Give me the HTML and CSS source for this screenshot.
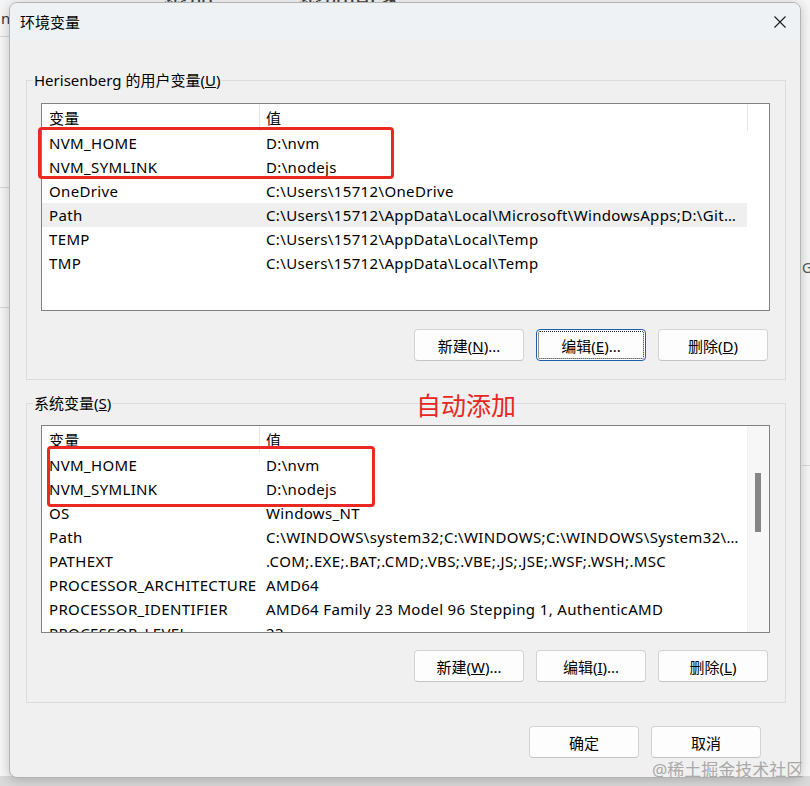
FILE: index.html
```html
<!DOCTYPE html>
<html lang="zh-CN">
<head>
    <meta charset="UTF-8">
    <title>环境变量</title>
    <link rel="stylesheet" href="styles.css">
</head>
<body>
    <div class="desktop">
        <!-- bits of the window behind -->
        <div class="behind behind-top">添加　一　添加回家</div>
        <div class="behind behind-n">n</div>
        <div class="behind behind-g">G</div>
        <div class="behind-line l1"></div>
        <div class="behind-line l2"></div>
        <div class="behind-line l3"></div>
        <div class="behind-line l4"></div>
        <div class="behind-bottom"></div>

        <div class="dialog">
            <div class="titlebar">
                <span class="title">环境变量</span>
                <span class="close">
                    <svg width="12" height="12" viewBox="0 0 12 12"><path d="M0.5 0.5 L11.5 11.5 M11.5 0.5 L0.5 11.5" stroke="#1b1b1b" stroke-width="1.1" fill="none"/></svg>
                </span>
            </div>

            <div class="content">
                <fieldset class="group">
                    <legend>Herisenberg 的用户变量(<u>U</u>)</legend>
                    <div class="list">
                        <div class="rows">
                            <div class="row head"><span class="name">变量</span><span class="value">值</span></div>
                            <div class="row"><span class="name">NVM_HOME</span><span class="value">D:\nvm</span></div>
                            <div class="row"><span class="name">NVM_SYMLINK</span><span class="value">D:\nodejs</span></div>
                            <div class="row"><span class="name">OneDrive</span><span class="value">C:\Users\15712\OneDrive</span></div>
                            <div class="row hover"><span class="name">Path</span><span class="value">C:\Users\15712\AppData\Local\Microsoft\WindowsApps;D:\Git\cmd;D:\nvm;D:\nodejs</span></div>
                            <div class="row"><span class="name">TEMP</span><span class="value">C:\Users\15712\AppData\Local\Temp</span></div>
                            <div class="row"><span class="name">TMP</span><span class="value">C:\Users\15712\AppData\Local\Temp</span></div>
                        </div>
                        <div class="side"><div class="side-head"></div></div>
                    </div>
                    <div class="buttons">
                        <button>新建(<u>N</u>)...</button>
                        <button class="focused">编辑(<u>E</u>)...</button>
                        <button>删除(<u>D</u>)</button>
                    </div>
                </fieldset>

                <fieldset class="group second">
                    <legend>系统变量(<u>S</u>)</legend>
                    <div class="list">
                        <div class="rows">
                            <div class="row head"><span class="name">变量</span><span class="value">值</span></div>
                            <div class="row"><span class="name">NVM_HOME</span><span class="value">D:\nvm</span></div>
                            <div class="row"><span class="name">NVM_SYMLINK</span><span class="value">D:\nodejs</span></div>
                            <div class="row"><span class="name">OS</span><span class="value">Windows_NT</span></div>
                            <div class="row"><span class="name">Path</span><span class="value">C:\WINDOWS\system32;C:\WINDOWS;C:\WINDOWS\System32\Wbem;C:\WINDOWS</span></div>
                            <div class="row"><span class="name">PATHEXT</span><span class="value">.COM;.EXE;.BAT;.CMD;.VBS;.VBE;.JS;.JSE;.WSF;.WSH;.MSC</span></div>
                            <div class="row"><span class="name">PROCESSOR_ARCHITECTURE</span><span class="value">AMD64</span></div>
                            <div class="row"><span class="name">PROCESSOR_IDENTIFIER</span><span class="value">AMD64 Family 23 Model 96 Stepping 1, AuthenticAMD</span></div>
                            <div class="row"><span class="name">PROCESSOR_LEVEL</span><span class="value">23</span></div>
                        </div>
                        <div class="side scroll"><div class="thumb"></div></div>
                    </div>
                    <div class="buttons">
                        <button>新建(<u>W</u>)...</button>
                        <button>编辑(<u>I</u>)...</button>
                        <button>删除(<u>L</u>)</button>
                    </div>
                </fieldset>

                <div class="footer">
                    <button>确定</button>
                    <button>取消</button>
                </div>
            </div>

            <!-- annotations drawn over the screenshot -->
            <div class="mark mark-user"></div>
            <div class="mark mark-system"></div>
            <div class="note">自动添加</div>
        </div>

        <div class="watermark">@稀土掘金技术社区</div>
    </div>
</body>
</html>
```

FILE: styles.css
```css
body {
    margin: 0;
    background: #f6f6f6;
    font-family: "Noto Sans", "Noto Sans CJK SC", sans-serif;
    font-size: 15px;
    color: #000;
}
.desktop {
    position: relative;
    width: 810px;
    height: 786px;
    overflow: hidden;
}

/* window behind */
.behind {
    position: absolute;
    color: #333;
}
.behind-top {
    top: -22px;
    left: 160px;
    font-size: 27px;
    color: #444;
}
.behind-n {
    top: 8px;
    left: 1px;
    font-size: 15px;
}
.behind-g {
    top: 258px;
    left: 802px;
    font-size: 14px;
    color: #555;
}
.behind-line {
    position: absolute;
    height: 1px;
    background: #d6d6d6;
}
.l1 { left: 0; width: 9px; top: 36px; }
.l2 { left: 0; width: 9px; top: 187px; }
.l3 { left: 0; width: 9px; top: 307px; }
.l4 { left: 802px; width: 8px; top: 465px; }
.behind-bottom {
    position: absolute;
    left: 0;
    right: 0;
    bottom: 0;
    height: 10px;
    background: #d9d9d9;
}

/* dialog */
.dialog {
    position: relative;
    margin: 2px 0 0 9px;
    width: 792px;
    height: 776px;
    box-sizing: border-box;
    border: 1px solid #b4b4b4;
    border-radius: 8px;
    background: #f0f0f0;
    box-shadow: 0 2px 12px rgba(0,0,0,0.22);
    overflow: hidden;
}
.titlebar {
    display: flex;
    align-items: center;
    justify-content: space-between;
    height: 38px;
    padding-left: 10px;
    background: #eef2f4;
}
.title {
    font-size: 15px;
    line-height: 20px;
}
.close {
    display: flex;
    align-items: center;
    justify-content: center;
    width: 40px;
    height: 38px;
}
.content {
    padding: 29px 14px 0 16px;
}

/* group boxes */
.group {
    margin: 0;
    min-width: 0;
    border: 1px solid #dcdcdc;
    padding: 13px 15px 18px 14px;
}
.group legend {
    margin-left: -8px;
    padding: 0 1px;
    line-height: 20px;
}
.group.second {
    margin-top: 13px;
    padding-top: 12px;
    padding-bottom: 20px;
}

/* list views */
.list {
    display: flex;
    height: 206px;
    border: 1px solid #828282;
    background: #fff;
    overflow: hidden;
}
.rows {
    flex: 0 0 705px;
    overflow: hidden;
    letter-spacing: 0.35px;
}
.row {
    display: flex;
    height: 24px;
    line-height: 24px;
    white-space: nowrap;
}
.row.head {
    height: 27px;
    line-height: 28px;
}
.row.hover {
    background: #efefef;
}
.name {
    flex: 0 0 218px;
    box-sizing: border-box;
    padding-left: 7px;
    overflow: hidden;
}
.value {
    flex: 1;
    min-width: 0;
    padding: 0 6px;
    overflow: hidden;
    text-overflow: ellipsis;
}
.head .name {
    border-right: 1px solid #e5e5e5;
}
.side {
    flex: 1;
}
.side-head {
    height: 27px;
    border-left: 1px solid #e5e5e5;
}
.side.scroll {
    background: #f7f7f7;
    border-left: 1px solid #f0f0f0;
}
.thumb {
    margin: 47px 0 0 7px;
    width: 6px;
    height: 59px;
    background: #868686;
}

/* buttons */
.buttons,
.footer {
    display: flex;
    justify-content: flex-end;
    gap: 12px;
}
.buttons {
    margin-top: 18px;
    padding-right: 2px;
}
.second .buttons {
    margin-top: 17px;
}
.footer {
    margin-top: 23px;
    padding-right: 25px;
}
button {
    width: 110px;
    height: 32px;
    box-sizing: border-box;
    padding: 0;
    border: 1px solid #d3d3d3;
    border-bottom-color: #c4c4c4;
    border-radius: 4px;
    background: #fdfdfd;
    font-family: inherit;
    font-size: 15px;
    color: #000;
}
button.focused {
    border-color: #1d5fa8;
    outline: 1px dotted #222;
    outline-offset: -3px;
}

/* red annotations */
.mark {
    position: absolute;
    border: 3px solid #ea2a22;
    border-radius: 4px;
}
.mark-user {
    left: 28px;
    top: 124px;
    width: 350px;
    height: 46px;
}
.mark-system {
    left: 37px;
    top: 443px;
    width: 322px;
    height: 55px;
}
.note {
    position: absolute;
    left: 406px;
    top: 390px;
    font-size: 25px;
    line-height: 25px;
    color: #e8261d;
}
.watermark {
    position: absolute;
    left: 652px;
    top: 760px;
    font-size: 17px;
    line-height: 20px;
    color: #a9a9a9;
}
```
